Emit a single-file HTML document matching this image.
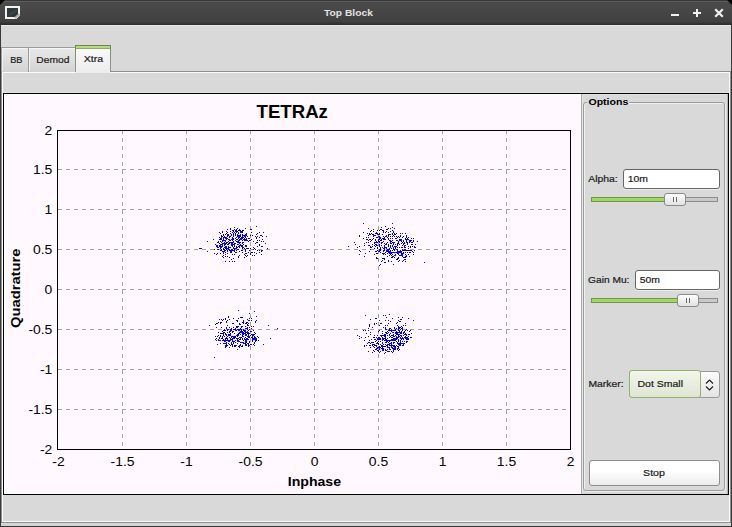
<!DOCTYPE html>
<html><head><meta charset="utf-8">
<style>
*{margin:0;padding:0;box-sizing:border-box}
html,body{width:732px;height:527px;overflow:hidden;background:#d9d9d9;font-family:"Liberation Sans",sans-serif}
.a{position:absolute}
</style></head><body>
<!-- window base -->
<div class="a" style="left:0;top:0;width:732px;height:527px;background:#393939"></div>
<div class="a" style="left:1px;top:25px;width:730px;height:501px;background:#d9d9d9"></div>
<div class="a" style="left:1px;top:25px;width:730px;height:1px;background:#e9e9e9"></div>
<div class="a" style="left:1px;top:523px;width:730px;height:3px;background:linear-gradient(#dadada,#cfcfcf)"></div>
<!-- title bar -->
<div class="a" style="left:0;top:0;width:732px;height:25px;background:linear-gradient(#383838 0,#383838 1px,#5c5c5c 1px,#5c5c5c 2px,#4b4b4b 2px,#414141 22px,#363636 23px,#2c2c2c 25px)"></div>

<!-- tab pane frame -->
<div class="a" style="left:1px;top:71px;width:730px;height:452px;border:1px solid #8f8f8f"></div>
<div class="a" style="left:2px;top:72px;width:728px;height:450px;border:1px solid #fbfbfb"></div>
<!-- tabs -->
<div class="a" style="left:1px;top:47px;width:28px;height:25px;border:1px solid #9a9a9a;border-bottom:none;background:linear-gradient(#e9e9e9,#d3d3d3)"><div class="a" style="left:0;top:0;width:26px;height:23px;border-left:1px solid #f4f4f4;border-top:1px solid #f4f4f4"></div></div>
<div class="a" style="left:28px;top:47px;width:48px;height:25px;border:1px solid #9a9a9a;border-bottom:none;background:linear-gradient(#e9e9e9,#d3d3d3)"><div class="a" style="left:0;top:0;width:46px;height:23px;border-left:1px solid #f4f4f4;border-top:1px solid #f4f4f4"></div></div>
<div class="a" style="left:75px;top:45px;width:36px;height:28px;background:linear-gradient(#fbfbfb,#ececec)"></div>
<div class="a" style="left:75px;top:45px;width:1px;height:27px;background:linear-gradient(#6f8a48,#7f9466 30%,#8f9a88)"></div>
<div class="a" style="left:110px;top:45px;width:1px;height:27px;background:linear-gradient(#6f8a48,#7f9466 30%,#8f9a88)"></div>
<div class="a" style="left:75px;top:45px;width:36px;height:1px;background:#6f8a48"></div>
<div class="a" style="left:76px;top:46px;width:34px;height:2px;background:#b6db78"></div>
<div class="a" style="left:76px;top:48px;width:34px;height:1px;background:#8ea76a"></div>

<!-- black frame -->
<div class="a" style="left:3px;top:92px;width:726px;height:1px;background:#e3e3e3"></div>
<div class="a" style="left:3px;top:93px;width:726px;height:402px;border:1px solid #000"></div>
<!-- plot area -->
<div class="a" style="left:4px;top:94px;width:577px;height:400px;background:#fff8ff;border:1px solid #ffffff"></div>
<div class="a" style="left:581px;top:94px;width:1px;height:400px;background:#a9a9a9"></div>
<div class="a" style="left:582px;top:94px;width:1px;height:400px;background:#e6e6e6"></div>
<div class="a" style="left:582px;top:94px;width:146px;height:1px;background:#e6e6e6"></div>
<div class="a" style="left:727px;top:94px;width:1px;height:400px;background:#b4b4b4"></div>

<!-- options group -->
<div class="a" style="left:584px;top:103px;width:142px;height:389px;border:1px solid #f0f0f0;border-radius:3px"></div>
<div class="a" style="left:583px;top:102px;width:142px;height:389px;border:1px solid #9c9c9c;border-radius:3px"></div>
<div class="a" style="left:587px;top:96px;width:42px;height:12px;background:#d9d9d9"></div>

<div class="a" style="left:623px;top:169px;width:97px;height:20px;border:1px solid #666;border-radius:3px;background:#fff;box-shadow:0 1px 0 #ececec"></div>
<!-- slider 1 -->
<div class="a" style="left:591px;top:197px;width:127px;height:5px;border:1px solid #8c8c8c;background:#c9c9c9"></div>
<div class="a" style="left:591px;top:197px;width:75px;height:5px;border:1px solid #6d9a3e;background:#a6d46b"></div>
<div class="a" style="left:664px;top:193px;width:22px;height:13px;border:1px solid #8a8a8a;border-radius:3px;background:linear-gradient(#fdfdfd,#e2e2e2)"></div>
<div class="a" style="left:673px;top:197px;width:1px;height:5px;background:#6a6a6a"></div>
<div class="a" style="left:676px;top:197px;width:1px;height:5px;background:#6a6a6a"></div>

<div class="a" style="left:635px;top:270px;width:85px;height:20px;border:1px solid #666;border-radius:3px;background:#fff;box-shadow:0 1px 0 #ececec"></div>
<!-- slider 2 -->
<div class="a" style="left:591px;top:298px;width:127px;height:5px;border:1px solid #8c8c8c;background:#c9c9c9"></div>
<div class="a" style="left:591px;top:298px;width:88px;height:5px;border:1px solid #6d9a3e;background:#a6d46b"></div>
<div class="a" style="left:677px;top:294px;width:22px;height:13px;border:1px solid #8a8a8a;border-radius:3px;background:linear-gradient(#fdfdfd,#e2e2e2)"></div>
<div class="a" style="left:686px;top:298px;width:1px;height:5px;background:#6a6a6a"></div>
<div class="a" style="left:689px;top:298px;width:1px;height:5px;background:#6a6a6a"></div>

<!-- combo -->
<div class="a" style="left:699px;top:371px;width:21px;height:27px;border:1px solid #9a9a9a;border-radius:0 3px 3px 0;background:linear-gradient(#fcfcfc,#e4e4e4)"></div>
<div class="a" style="left:629px;top:370px;width:72px;height:28px;border:1px solid #93b06c;border-radius:3px;background:linear-gradient(#f3f6ec,#dfe5d3)"></div>
<svg class="a" style="left:700px;top:371px" width="20" height="26">
 <path d="M6 12.5L9.5 9L13 12.5M6 15.5L9.5 19L13 15.5" fill="none" stroke="#1a1a1a" stroke-width="1.1"/>
</svg>
<!-- stop button -->
<div class="a" style="left:589px;top:460px;width:131px;height:26px;border:1px solid #8e8e8e;border-radius:3px;background:linear-gradient(#ffffff,#ffffff 40%,#ececec)"></div>

<!-- overlay svg: title bar icons, plot, texts -->
<svg class="a" style="left:0;top:0" width="732" height="527" font-family="Liberation Sans">
 <path d="M0 0H5L0 5Z" fill="#000"/>
 <path d="M727 0H732V5Z" fill="#000"/>
 <path d="M6 7H19V15L16 18H6Z" fill="none" stroke="#f2f2f2" stroke-width="2"/>
 <path d="M7 8H18V15L15 17H7Z" fill="#313a3a"/>
 <path d="M9 15L17 10" stroke="#3d4747" stroke-width="2"/>
 <path d="M15 18L19.5 14" stroke="#a8b0a8" stroke-width="2"/>
 <rect x="671" y="14" width="8" height="2" fill="#f0f0f0"/>
 <rect x="693" y="12" width="8" height="2" fill="#f0f0f0"/>
 <rect x="696" y="9" width="2" height="8" fill="#f0f0f0"/>
 <path d="M716 10L722 16M722 10L716 16" stroke="#f0f0f0" stroke-width="2.2" stroke-linecap="square"/>
 <line x1="122.5" y1="130" x2="122.5" y2="449" stroke="#a2a2a2" stroke-width="1" stroke-dasharray="4 4"/>
<line x1="186.5" y1="130" x2="186.5" y2="449" stroke="#a2a2a2" stroke-width="1" stroke-dasharray="4 4"/>
<line x1="250.5" y1="130" x2="250.5" y2="449" stroke="#a2a2a2" stroke-width="1" stroke-dasharray="4 4"/>
<line x1="314.5" y1="130" x2="314.5" y2="449" stroke="#a2a2a2" stroke-width="1" stroke-dasharray="4 4"/>
<line x1="378.5" y1="130" x2="378.5" y2="449" stroke="#a2a2a2" stroke-width="1" stroke-dasharray="4 4"/>
<line x1="442.5" y1="130" x2="442.5" y2="449" stroke="#a2a2a2" stroke-width="1" stroke-dasharray="4 4"/>
<line x1="506.5" y1="130" x2="506.5" y2="449" stroke="#a2a2a2" stroke-width="1" stroke-dasharray="4 4"/>
<line x1="58" y1="169.5" x2="570" y2="169.5" stroke="#a2a2a2" stroke-width="1" stroke-dasharray="4 4"/>
<line x1="58" y1="209.5" x2="570" y2="209.5" stroke="#a2a2a2" stroke-width="1" stroke-dasharray="4 4"/>
<line x1="58" y1="249.5" x2="570" y2="249.5" stroke="#a2a2a2" stroke-width="1" stroke-dasharray="4 4"/>
<line x1="58" y1="289.5" x2="570" y2="289.5" stroke="#a2a2a2" stroke-width="1" stroke-dasharray="4 4"/>
<line x1="58" y1="329.5" x2="570" y2="329.5" stroke="#a2a2a2" stroke-width="1" stroke-dasharray="4 4"/>
<line x1="58" y1="369.5" x2="570" y2="369.5" stroke="#a2a2a2" stroke-width="1" stroke-dasharray="4 4"/>
<line x1="58" y1="409.5" x2="570" y2="409.5" stroke="#a2a2a2" stroke-width="1" stroke-dasharray="4 4"/>
<path d="M199 248h1v1h-1zM200 248h1v1h-1zM201 248h1v1h-1zM207 241h1v1h-1zM207 251h1v1h-1zM209 325h1v1h-1zM213 239h1v1h-1zM214 249h1v1h-1zM214 253h1v1h-1zM214 357h1v1h-1zM215 244h1v1h-1zM215 324h1v1h-1zM215 336h1v1h-1zM215 339h1v1h-1zM216 245h1v1h-1zM216 246h1v1h-1zM216 254h1v1h-1zM216 323h1v1h-1zM216 327h1v1h-1zM216 338h1v1h-1zM216 340h1v1h-1zM217 242h1v1h-1zM217 245h1v1h-1zM217 246h1v1h-1zM217 247h1v1h-1zM217 249h1v1h-1zM217 253h1v1h-1zM217 323h1v1h-1zM217 336h1v1h-1zM217 344h1v1h-1zM218 241h1v1h-1zM218 242h1v1h-1zM218 247h1v1h-1zM218 249h1v1h-1zM218 322h1v1h-1zM218 332h1v1h-1zM218 335h1v1h-1zM218 339h1v1h-1zM218 340h1v1h-1zM219 232h1v1h-1zM219 237h1v1h-1zM219 239h1v1h-1zM219 243h1v1h-1zM219 245h1v1h-1zM219 246h1v1h-1zM219 319h1v1h-1zM219 337h1v1h-1zM219 338h1v1h-1zM219 340h1v1h-1zM220 233h1v1h-1zM220 238h1v1h-1zM220 239h1v1h-1zM220 241h1v1h-1zM220 244h1v1h-1zM220 245h1v1h-1zM220 246h1v1h-1zM220 247h1v1h-1zM220 248h1v1h-1zM220 250h1v1h-1zM220 253h1v1h-1zM220 322h1v1h-1zM220 323h1v1h-1zM220 333h1v1h-1zM220 335h1v1h-1zM220 336h1v1h-1zM220 340h1v1h-1zM220 343h1v1h-1zM221 235h1v1h-1zM221 236h1v1h-1zM221 237h1v1h-1zM221 238h1v1h-1zM221 239h1v1h-1zM221 242h1v1h-1zM221 244h1v1h-1zM221 246h1v1h-1zM221 247h1v1h-1zM221 249h1v1h-1zM221 250h1v1h-1zM221 319h1v1h-1zM221 322h1v1h-1zM221 327h1v1h-1zM221 333h1v1h-1zM221 338h1v1h-1zM222 231h1v1h-1zM222 232h1v1h-1zM222 236h1v1h-1zM222 240h1v1h-1zM222 241h1v1h-1zM222 243h1v1h-1zM222 244h1v1h-1zM222 245h1v1h-1zM222 246h1v1h-1zM222 251h1v1h-1zM222 256h1v1h-1zM222 320h1v1h-1zM222 331h1v1h-1zM222 333h1v1h-1zM222 336h1v1h-1zM222 337h1v1h-1zM222 338h1v1h-1zM222 340h1v1h-1zM223 234h1v1h-1zM223 235h1v1h-1zM223 237h1v1h-1zM223 238h1v1h-1zM223 239h1v1h-1zM223 240h1v1h-1zM223 243h1v1h-1zM223 248h1v1h-1zM223 249h1v1h-1zM223 251h1v1h-1zM223 252h1v1h-1zM223 253h1v1h-1zM223 255h1v1h-1zM223 257h1v1h-1zM223 319h1v1h-1zM223 330h1v1h-1zM223 332h1v1h-1zM223 333h1v1h-1zM223 334h1v1h-1zM223 335h1v1h-1zM223 339h1v1h-1zM223 340h1v1h-1zM223 343h1v1h-1zM224 236h1v1h-1zM224 237h1v1h-1zM224 240h1v1h-1zM224 242h1v1h-1zM224 243h1v1h-1zM224 244h1v1h-1zM224 245h1v1h-1zM224 247h1v1h-1zM224 249h1v1h-1zM224 250h1v1h-1zM224 251h1v1h-1zM224 329h1v1h-1zM224 330h1v1h-1zM224 332h1v1h-1zM224 336h1v1h-1zM224 340h1v1h-1zM224 341h1v1h-1zM224 343h1v1h-1zM225 234h1v1h-1zM225 237h1v1h-1zM225 238h1v1h-1zM225 240h1v1h-1zM225 241h1v1h-1zM225 243h1v1h-1zM225 244h1v1h-1zM225 246h1v1h-1zM225 247h1v1h-1zM225 248h1v1h-1zM225 250h1v1h-1zM225 252h1v1h-1zM225 254h1v1h-1zM225 256h1v1h-1zM225 261h1v1h-1zM225 318h1v1h-1zM225 319h1v1h-1zM225 330h1v1h-1zM225 333h1v1h-1zM225 334h1v1h-1zM225 338h1v1h-1zM225 339h1v1h-1zM225 340h1v1h-1zM225 341h1v1h-1zM225 343h1v1h-1zM225 345h1v1h-1zM225 346h1v1h-1zM225 347h1v1h-1zM226 231h1v1h-1zM226 233h1v1h-1zM226 237h1v1h-1zM226 238h1v1h-1zM226 239h1v1h-1zM226 242h1v1h-1zM226 243h1v1h-1zM226 246h1v1h-1zM226 247h1v1h-1zM226 248h1v1h-1zM226 249h1v1h-1zM226 321h1v1h-1zM226 322h1v1h-1zM226 327h1v1h-1zM226 328h1v1h-1zM226 334h1v1h-1zM226 335h1v1h-1zM226 337h1v1h-1zM226 338h1v1h-1zM226 340h1v1h-1zM226 342h1v1h-1zM226 343h1v1h-1zM226 344h1v1h-1zM226 345h1v1h-1zM226 346h1v1h-1zM227 229h1v1h-1zM227 232h1v1h-1zM227 234h1v1h-1zM227 235h1v1h-1zM227 236h1v1h-1zM227 238h1v1h-1zM227 242h1v1h-1zM227 244h1v1h-1zM227 248h1v1h-1zM227 250h1v1h-1zM227 251h1v1h-1zM227 253h1v1h-1zM227 256h1v1h-1zM227 320h1v1h-1zM227 325h1v1h-1zM227 329h1v1h-1zM227 330h1v1h-1zM227 332h1v1h-1zM227 336h1v1h-1zM227 338h1v1h-1zM227 339h1v1h-1zM227 340h1v1h-1zM227 345h1v1h-1zM228 234h1v1h-1zM228 235h1v1h-1zM228 239h1v1h-1zM228 241h1v1h-1zM228 243h1v1h-1zM228 244h1v1h-1zM228 246h1v1h-1zM228 247h1v1h-1zM228 248h1v1h-1zM228 249h1v1h-1zM228 316h1v1h-1zM228 317h1v1h-1zM228 329h1v1h-1zM228 334h1v1h-1zM228 335h1v1h-1zM228 340h1v1h-1zM228 341h1v1h-1zM228 343h1v1h-1zM229 236h1v1h-1zM229 237h1v1h-1zM229 239h1v1h-1zM229 240h1v1h-1zM229 242h1v1h-1zM229 243h1v1h-1zM229 247h1v1h-1zM229 249h1v1h-1zM229 250h1v1h-1zM229 257h1v1h-1zM229 261h1v1h-1zM229 319h1v1h-1zM229 327h1v1h-1zM229 331h1v1h-1zM229 332h1v1h-1zM229 334h1v1h-1zM229 335h1v1h-1zM229 337h1v1h-1zM229 340h1v1h-1zM229 341h1v1h-1zM229 344h1v1h-1zM229 347h1v1h-1zM230 228h1v1h-1zM230 229h1v1h-1zM230 231h1v1h-1zM230 233h1v1h-1zM230 236h1v1h-1zM230 240h1v1h-1zM230 242h1v1h-1zM230 247h1v1h-1zM230 250h1v1h-1zM230 251h1v1h-1zM230 252h1v1h-1zM230 329h1v1h-1zM230 330h1v1h-1zM230 331h1v1h-1zM230 333h1v1h-1zM230 334h1v1h-1zM230 335h1v1h-1zM230 338h1v1h-1zM230 339h1v1h-1zM230 340h1v1h-1zM230 345h1v1h-1zM231 234h1v1h-1zM231 235h1v1h-1zM231 239h1v1h-1zM231 242h1v1h-1zM231 243h1v1h-1zM231 244h1v1h-1zM231 245h1v1h-1zM231 249h1v1h-1zM231 250h1v1h-1zM231 251h1v1h-1zM231 252h1v1h-1zM231 259h1v1h-1zM231 328h1v1h-1zM231 329h1v1h-1zM231 330h1v1h-1zM231 336h1v1h-1zM231 337h1v1h-1zM231 339h1v1h-1zM231 342h1v1h-1zM231 343h1v1h-1zM231 344h1v1h-1zM232 230h1v1h-1zM232 232h1v1h-1zM232 237h1v1h-1zM232 238h1v1h-1zM232 239h1v1h-1zM232 240h1v1h-1zM232 242h1v1h-1zM232 243h1v1h-1zM232 244h1v1h-1zM232 245h1v1h-1zM232 246h1v1h-1zM232 249h1v1h-1zM232 250h1v1h-1zM232 254h1v1h-1zM232 261h1v1h-1zM232 323h1v1h-1zM232 331h1v1h-1zM232 332h1v1h-1zM232 336h1v1h-1zM232 338h1v1h-1zM232 339h1v1h-1zM232 340h1v1h-1zM232 341h1v1h-1zM232 344h1v1h-1zM232 345h1v1h-1zM232 346h1v1h-1zM233 230h1v1h-1zM233 231h1v1h-1zM233 233h1v1h-1zM233 234h1v1h-1zM233 235h1v1h-1zM233 236h1v1h-1zM233 238h1v1h-1zM233 239h1v1h-1zM233 241h1v1h-1zM233 242h1v1h-1zM233 244h1v1h-1zM233 247h1v1h-1zM233 248h1v1h-1zM233 250h1v1h-1zM233 258h1v1h-1zM233 318h1v1h-1zM233 323h1v1h-1zM233 327h1v1h-1zM233 329h1v1h-1zM233 331h1v1h-1zM233 336h1v1h-1zM233 337h1v1h-1zM233 338h1v1h-1zM233 341h1v1h-1zM233 342h1v1h-1zM233 343h1v1h-1zM234 227h1v1h-1zM234 229h1v1h-1zM234 232h1v1h-1zM234 243h1v1h-1zM234 244h1v1h-1zM234 245h1v1h-1zM234 246h1v1h-1zM234 248h1v1h-1zM234 249h1v1h-1zM234 250h1v1h-1zM234 251h1v1h-1zM234 254h1v1h-1zM234 261h1v1h-1zM234 329h1v1h-1zM234 333h1v1h-1zM234 336h1v1h-1zM234 337h1v1h-1zM234 338h1v1h-1zM234 341h1v1h-1zM234 345h1v1h-1zM234 346h1v1h-1zM235 230h1v1h-1zM235 231h1v1h-1zM235 233h1v1h-1zM235 234h1v1h-1zM235 235h1v1h-1zM235 238h1v1h-1zM235 240h1v1h-1zM235 243h1v1h-1zM235 248h1v1h-1zM235 252h1v1h-1zM235 328h1v1h-1zM235 329h1v1h-1zM235 330h1v1h-1zM235 336h1v1h-1zM235 337h1v1h-1zM235 340h1v1h-1zM235 342h1v1h-1zM235 345h1v1h-1zM235 346h1v1h-1zM236 229h1v1h-1zM236 230h1v1h-1zM236 231h1v1h-1zM236 232h1v1h-1zM236 237h1v1h-1zM236 239h1v1h-1zM236 241h1v1h-1zM236 246h1v1h-1zM236 247h1v1h-1zM236 248h1v1h-1zM236 250h1v1h-1zM236 252h1v1h-1zM236 320h1v1h-1zM236 326h1v1h-1zM236 327h1v1h-1zM236 330h1v1h-1zM236 335h1v1h-1zM236 338h1v1h-1zM236 345h1v1h-1zM237 228h1v1h-1zM237 231h1v1h-1zM237 234h1v1h-1zM237 235h1v1h-1zM237 236h1v1h-1zM237 239h1v1h-1zM237 241h1v1h-1zM237 242h1v1h-1zM237 244h1v1h-1zM237 247h1v1h-1zM237 249h1v1h-1zM237 320h1v1h-1zM237 321h1v1h-1zM237 326h1v1h-1zM237 327h1v1h-1zM237 329h1v1h-1zM237 334h1v1h-1zM237 335h1v1h-1zM237 336h1v1h-1zM237 338h1v1h-1zM237 339h1v1h-1zM237 340h1v1h-1zM237 341h1v1h-1zM237 343h1v1h-1zM237 349h1v1h-1zM238 230h1v1h-1zM238 232h1v1h-1zM238 233h1v1h-1zM238 235h1v1h-1zM238 236h1v1h-1zM238 237h1v1h-1zM238 238h1v1h-1zM238 240h1v1h-1zM238 241h1v1h-1zM238 242h1v1h-1zM238 244h1v1h-1zM238 246h1v1h-1zM238 249h1v1h-1zM238 256h1v1h-1zM238 257h1v1h-1zM238 310h1v1h-1zM238 318h1v1h-1zM238 326h1v1h-1zM238 329h1v1h-1zM238 330h1v1h-1zM238 333h1v1h-1zM238 334h1v1h-1zM238 335h1v1h-1zM238 338h1v1h-1zM238 340h1v1h-1zM238 341h1v1h-1zM238 346h1v1h-1zM239 229h1v1h-1zM239 230h1v1h-1zM239 235h1v1h-1zM239 236h1v1h-1zM239 237h1v1h-1zM239 239h1v1h-1zM239 240h1v1h-1zM239 242h1v1h-1zM239 243h1v1h-1zM239 245h1v1h-1zM239 246h1v1h-1zM239 247h1v1h-1zM239 251h1v1h-1zM239 255h1v1h-1zM239 323h1v1h-1zM239 324h1v1h-1zM239 329h1v1h-1zM239 330h1v1h-1zM239 332h1v1h-1zM239 333h1v1h-1zM239 337h1v1h-1zM239 339h1v1h-1zM239 341h1v1h-1zM239 345h1v1h-1zM239 346h1v1h-1zM239 347h1v1h-1zM240 230h1v1h-1zM240 231h1v1h-1zM240 232h1v1h-1zM240 234h1v1h-1zM240 235h1v1h-1zM240 236h1v1h-1zM240 238h1v1h-1zM240 239h1v1h-1zM240 242h1v1h-1zM240 244h1v1h-1zM240 245h1v1h-1zM240 317h1v1h-1zM240 324h1v1h-1zM240 328h1v1h-1zM240 329h1v1h-1zM240 331h1v1h-1zM240 332h1v1h-1zM240 334h1v1h-1zM240 337h1v1h-1zM240 338h1v1h-1zM240 339h1v1h-1zM240 342h1v1h-1zM240 344h1v1h-1zM240 345h1v1h-1zM241 231h1v1h-1zM241 232h1v1h-1zM241 237h1v1h-1zM241 238h1v1h-1zM241 239h1v1h-1zM241 245h1v1h-1zM241 246h1v1h-1zM241 250h1v1h-1zM241 317h1v1h-1zM241 326h1v1h-1zM241 327h1v1h-1zM241 329h1v1h-1zM241 330h1v1h-1zM241 331h1v1h-1zM241 332h1v1h-1zM241 337h1v1h-1zM241 342h1v1h-1zM241 346h1v1h-1zM242 230h1v1h-1zM242 231h1v1h-1zM242 232h1v1h-1zM242 234h1v1h-1zM242 235h1v1h-1zM242 236h1v1h-1zM242 237h1v1h-1zM242 238h1v1h-1zM242 240h1v1h-1zM242 242h1v1h-1zM242 243h1v1h-1zM242 245h1v1h-1zM242 246h1v1h-1zM242 247h1v1h-1zM242 248h1v1h-1zM242 250h1v1h-1zM242 252h1v1h-1zM242 317h1v1h-1zM242 322h1v1h-1zM242 326h1v1h-1zM242 331h1v1h-1zM242 332h1v1h-1zM242 333h1v1h-1zM242 334h1v1h-1zM242 335h1v1h-1zM242 336h1v1h-1zM242 338h1v1h-1zM242 339h1v1h-1zM242 342h1v1h-1zM242 345h1v1h-1zM242 346h1v1h-1zM243 230h1v1h-1zM243 235h1v1h-1zM243 237h1v1h-1zM243 239h1v1h-1zM243 242h1v1h-1zM243 244h1v1h-1zM243 247h1v1h-1zM243 320h1v1h-1zM243 321h1v1h-1zM243 322h1v1h-1zM243 323h1v1h-1zM243 329h1v1h-1zM243 330h1v1h-1zM243 332h1v1h-1zM243 333h1v1h-1zM243 334h1v1h-1zM243 336h1v1h-1zM243 340h1v1h-1zM243 342h1v1h-1zM243 343h1v1h-1zM244 235h1v1h-1zM244 236h1v1h-1zM244 238h1v1h-1zM244 239h1v1h-1zM244 240h1v1h-1zM244 248h1v1h-1zM244 254h1v1h-1zM244 257h1v1h-1zM244 330h1v1h-1zM244 331h1v1h-1zM244 333h1v1h-1zM244 338h1v1h-1zM244 339h1v1h-1zM244 343h1v1h-1zM245 228h1v1h-1zM245 234h1v1h-1zM245 235h1v1h-1zM245 236h1v1h-1zM245 237h1v1h-1zM245 239h1v1h-1zM245 240h1v1h-1zM245 245h1v1h-1zM245 246h1v1h-1zM245 249h1v1h-1zM245 250h1v1h-1zM245 251h1v1h-1zM245 253h1v1h-1zM245 255h1v1h-1zM245 323h1v1h-1zM245 326h1v1h-1zM245 328h1v1h-1zM245 330h1v1h-1zM245 331h1v1h-1zM245 332h1v1h-1zM245 333h1v1h-1zM245 334h1v1h-1zM245 335h1v1h-1zM245 337h1v1h-1zM245 339h1v1h-1zM245 340h1v1h-1zM245 341h1v1h-1zM245 342h1v1h-1zM245 343h1v1h-1zM245 344h1v1h-1zM245 345h1v1h-1zM246 233h1v1h-1zM246 234h1v1h-1zM246 235h1v1h-1zM246 238h1v1h-1zM246 239h1v1h-1zM246 240h1v1h-1zM246 245h1v1h-1zM246 246h1v1h-1zM246 248h1v1h-1zM246 253h1v1h-1zM246 256h1v1h-1zM246 322h1v1h-1zM246 323h1v1h-1zM246 328h1v1h-1zM246 332h1v1h-1zM246 334h1v1h-1zM246 335h1v1h-1zM246 338h1v1h-1zM246 339h1v1h-1zM246 340h1v1h-1zM246 341h1v1h-1zM246 342h1v1h-1zM246 344h1v1h-1zM246 345h1v1h-1zM247 236h1v1h-1zM247 240h1v1h-1zM247 248h1v1h-1zM247 255h1v1h-1zM247 319h1v1h-1zM247 322h1v1h-1zM247 324h1v1h-1zM247 325h1v1h-1zM247 327h1v1h-1zM247 328h1v1h-1zM247 329h1v1h-1zM247 331h1v1h-1zM247 332h1v1h-1zM247 333h1v1h-1zM247 336h1v1h-1zM247 338h1v1h-1zM247 339h1v1h-1zM247 343h1v1h-1zM248 238h1v1h-1zM248 241h1v1h-1zM248 248h1v1h-1zM248 252h1v1h-1zM248 320h1v1h-1zM248 323h1v1h-1zM248 325h1v1h-1zM248 330h1v1h-1zM248 332h1v1h-1zM248 333h1v1h-1zM248 334h1v1h-1zM248 335h1v1h-1zM248 336h1v1h-1zM248 337h1v1h-1zM248 339h1v1h-1zM248 343h1v1h-1zM248 344h1v1h-1zM248 345h1v1h-1zM248 346h1v1h-1zM249 238h1v1h-1zM249 240h1v1h-1zM249 250h1v1h-1zM249 313h1v1h-1zM249 318h1v1h-1zM249 320h1v1h-1zM249 327h1v1h-1zM249 329h1v1h-1zM249 333h1v1h-1zM249 336h1v1h-1zM249 337h1v1h-1zM249 341h1v1h-1zM249 342h1v1h-1zM249 345h1v1h-1zM250 229h1v1h-1zM250 235h1v1h-1zM250 240h1v1h-1zM250 248h1v1h-1zM250 253h1v1h-1zM250 254h1v1h-1zM250 331h1v1h-1zM250 335h1v1h-1zM250 344h1v1h-1zM251 229h1v1h-1zM251 232h1v1h-1zM251 239h1v1h-1zM251 252h1v1h-1zM251 318h1v1h-1zM251 320h1v1h-1zM251 326h1v1h-1zM251 328h1v1h-1zM251 331h1v1h-1zM251 334h1v1h-1zM251 337h1v1h-1zM251 344h1v1h-1zM252 235h1v1h-1zM252 252h1v1h-1zM252 255h1v1h-1zM252 334h1v1h-1zM252 335h1v1h-1zM252 336h1v1h-1zM252 337h1v1h-1zM252 338h1v1h-1zM252 339h1v1h-1zM252 340h1v1h-1zM252 341h1v1h-1zM253 241h1v1h-1zM253 247h1v1h-1zM253 249h1v1h-1zM253 326h1v1h-1zM253 330h1v1h-1zM253 334h1v1h-1zM253 335h1v1h-1zM253 338h1v1h-1zM253 339h1v1h-1zM253 344h1v1h-1zM254 248h1v1h-1zM254 252h1v1h-1zM254 255h1v1h-1zM254 311h1v1h-1zM254 332h1v1h-1zM254 334h1v1h-1zM254 336h1v1h-1zM254 337h1v1h-1zM254 338h1v1h-1zM254 339h1v1h-1zM254 342h1v1h-1zM254 343h1v1h-1zM254 345h1v1h-1zM255 236h1v1h-1zM255 243h1v1h-1zM255 249h1v1h-1zM255 321h1v1h-1zM255 322h1v1h-1zM255 333h1v1h-1zM255 337h1v1h-1zM255 338h1v1h-1zM255 339h1v1h-1zM255 340h1v1h-1zM255 341h1v1h-1zM256 226h1v1h-1zM256 234h1v1h-1zM256 237h1v1h-1zM256 238h1v1h-1zM256 242h1v1h-1zM256 253h1v1h-1zM256 316h1v1h-1zM256 320h1v1h-1zM256 338h1v1h-1zM256 339h1v1h-1zM256 340h1v1h-1zM257 233h1v1h-1zM257 236h1v1h-1zM257 240h1v1h-1zM257 242h1v1h-1zM257 246h1v1h-1zM257 250h1v1h-1zM257 336h1v1h-1zM258 337h1v1h-1zM258 340h1v1h-1zM259 232h1v1h-1zM259 237h1v1h-1zM259 240h1v1h-1zM259 244h1v1h-1zM259 245h1v1h-1zM259 250h1v1h-1zM259 252h1v1h-1zM260 235h1v1h-1zM261 235h1v1h-1zM261 241h1v1h-1zM261 246h1v1h-1zM261 250h1v1h-1zM261 251h1v1h-1zM261 254h1v1h-1zM262 236h1v1h-1zM262 239h1v1h-1zM262 246h1v1h-1zM262 250h1v1h-1zM263 232h1v1h-1zM263 241h1v1h-1zM263 344h1v1h-1zM265 243h1v1h-1zM266 236h1v1h-1zM267 248h1v1h-1zM268 325h1v1h-1zM270 338h1v1h-1zM277 328h1v1h-1zM348 246h1v1h-1zM354 242h1v1h-1zM355 244h1v1h-1zM357 247h1v1h-1zM357 335h1v1h-1zM359 235h1v1h-1zM359 236h1v1h-1zM359 246h1v1h-1zM359 250h1v1h-1zM359 254h1v1h-1zM359 336h1v1h-1zM359 338h1v1h-1zM360 251h1v1h-1zM361 337h1v1h-1zM363 223h1v1h-1zM363 232h1v1h-1zM363 238h1v1h-1zM363 330h1v1h-1zM364 243h1v1h-1zM364 245h1v1h-1zM364 256h1v1h-1zM364 340h1v1h-1zM364 345h1v1h-1zM364 346h1v1h-1zM365 253h1v1h-1zM365 315h1v1h-1zM365 330h1v1h-1zM365 337h1v1h-1zM366 237h1v1h-1zM366 239h1v1h-1zM366 242h1v1h-1zM366 333h1v1h-1zM366 345h1v1h-1zM367 233h1v1h-1zM367 239h1v1h-1zM367 343h1v1h-1zM368 228h1v1h-1zM368 235h1v1h-1zM368 237h1v1h-1zM368 240h1v1h-1zM368 242h1v1h-1zM368 245h1v1h-1zM368 328h1v1h-1zM368 330h1v1h-1zM368 336h1v1h-1zM368 342h1v1h-1zM368 351h1v1h-1zM369 233h1v1h-1zM369 234h1v1h-1zM369 239h1v1h-1zM369 245h1v1h-1zM369 251h1v1h-1zM369 324h1v1h-1zM369 325h1v1h-1zM369 326h1v1h-1zM369 340h1v1h-1zM369 342h1v1h-1zM369 345h1v1h-1zM370 231h1v1h-1zM370 234h1v1h-1zM370 239h1v1h-1zM370 241h1v1h-1zM370 246h1v1h-1zM370 247h1v1h-1zM370 249h1v1h-1zM370 319h1v1h-1zM370 332h1v1h-1zM370 334h1v1h-1zM370 343h1v1h-1zM370 345h1v1h-1zM370 347h1v1h-1zM371 230h1v1h-1zM371 233h1v1h-1zM371 240h1v1h-1zM371 247h1v1h-1zM371 339h1v1h-1zM371 342h1v1h-1zM372 234h1v1h-1zM372 239h1v1h-1zM372 244h1v1h-1zM372 246h1v1h-1zM372 327h1v1h-1zM372 342h1v1h-1zM372 344h1v1h-1zM372 345h1v1h-1zM372 352h1v1h-1zM373 229h1v1h-1zM373 231h1v1h-1zM373 234h1v1h-1zM373 235h1v1h-1zM373 236h1v1h-1zM373 238h1v1h-1zM373 337h1v1h-1zM373 342h1v1h-1zM373 344h1v1h-1zM373 346h1v1h-1zM373 350h1v1h-1zM374 235h1v1h-1zM374 242h1v1h-1zM374 243h1v1h-1zM374 245h1v1h-1zM374 248h1v1h-1zM374 254h1v1h-1zM374 323h1v1h-1zM374 324h1v1h-1zM374 335h1v1h-1zM374 337h1v1h-1zM374 339h1v1h-1zM374 344h1v1h-1zM374 345h1v1h-1zM374 347h1v1h-1zM374 351h1v1h-1zM375 233h1v1h-1zM375 235h1v1h-1zM375 239h1v1h-1zM375 240h1v1h-1zM375 242h1v1h-1zM375 244h1v1h-1zM375 246h1v1h-1zM375 251h1v1h-1zM375 318h1v1h-1zM375 339h1v1h-1zM375 341h1v1h-1zM375 345h1v1h-1zM375 349h1v1h-1zM376 232h1v1h-1zM376 233h1v1h-1zM376 237h1v1h-1zM376 241h1v1h-1zM376 242h1v1h-1zM376 244h1v1h-1zM376 245h1v1h-1zM376 251h1v1h-1zM376 253h1v1h-1zM376 257h1v1h-1zM376 258h1v1h-1zM376 318h1v1h-1zM376 323h1v1h-1zM376 337h1v1h-1zM376 340h1v1h-1zM376 343h1v1h-1zM376 345h1v1h-1zM376 346h1v1h-1zM376 348h1v1h-1zM376 349h1v1h-1zM377 230h1v1h-1zM377 233h1v1h-1zM377 234h1v1h-1zM377 237h1v1h-1zM377 242h1v1h-1zM377 245h1v1h-1zM377 247h1v1h-1zM377 248h1v1h-1zM377 250h1v1h-1zM377 253h1v1h-1zM377 258h1v1h-1zM377 335h1v1h-1zM377 338h1v1h-1zM377 339h1v1h-1zM377 342h1v1h-1zM377 343h1v1h-1zM377 347h1v1h-1zM377 348h1v1h-1zM377 350h1v1h-1zM378 234h1v1h-1zM378 236h1v1h-1zM378 239h1v1h-1zM378 240h1v1h-1zM378 241h1v1h-1zM378 251h1v1h-1zM378 331h1v1h-1zM378 337h1v1h-1zM378 338h1v1h-1zM378 339h1v1h-1zM378 341h1v1h-1zM378 343h1v1h-1zM378 344h1v1h-1zM378 347h1v1h-1zM378 350h1v1h-1zM378 351h1v1h-1zM379 230h1v1h-1zM379 233h1v1h-1zM379 234h1v1h-1zM379 236h1v1h-1zM379 237h1v1h-1zM379 238h1v1h-1zM379 239h1v1h-1zM379 241h1v1h-1zM379 242h1v1h-1zM379 244h1v1h-1zM379 245h1v1h-1zM379 246h1v1h-1zM379 249h1v1h-1zM379 250h1v1h-1zM379 251h1v1h-1zM379 265h1v1h-1zM379 320h1v1h-1zM379 325h1v1h-1zM379 330h1v1h-1zM379 337h1v1h-1zM379 338h1v1h-1zM379 339h1v1h-1zM379 346h1v1h-1zM379 347h1v1h-1zM379 348h1v1h-1zM379 349h1v1h-1zM379 352h1v1h-1zM380 229h1v1h-1zM380 237h1v1h-1zM380 238h1v1h-1zM380 240h1v1h-1zM380 247h1v1h-1zM380 248h1v1h-1zM380 249h1v1h-1zM380 250h1v1h-1zM380 252h1v1h-1zM380 264h1v1h-1zM380 323h1v1h-1zM380 335h1v1h-1zM380 338h1v1h-1zM380 339h1v1h-1zM380 341h1v1h-1zM380 344h1v1h-1zM380 347h1v1h-1zM380 351h1v1h-1zM381 227h1v1h-1zM381 229h1v1h-1zM381 239h1v1h-1zM381 240h1v1h-1zM381 242h1v1h-1zM381 243h1v1h-1zM381 245h1v1h-1zM381 261h1v1h-1zM381 323h1v1h-1zM381 335h1v1h-1zM381 336h1v1h-1zM381 345h1v1h-1zM381 346h1v1h-1zM381 348h1v1h-1zM382 230h1v1h-1zM382 234h1v1h-1zM382 238h1v1h-1zM382 242h1v1h-1zM382 247h1v1h-1zM382 253h1v1h-1zM382 258h1v1h-1zM382 260h1v1h-1zM382 331h1v1h-1zM382 333h1v1h-1zM382 335h1v1h-1zM382 337h1v1h-1zM382 338h1v1h-1zM382 339h1v1h-1zM382 340h1v1h-1zM382 342h1v1h-1zM382 343h1v1h-1zM382 345h1v1h-1zM382 346h1v1h-1zM382 347h1v1h-1zM382 348h1v1h-1zM382 349h1v1h-1zM382 350h1v1h-1zM383 230h1v1h-1zM383 231h1v1h-1zM383 232h1v1h-1zM383 236h1v1h-1zM383 238h1v1h-1zM383 239h1v1h-1zM383 241h1v1h-1zM383 248h1v1h-1zM383 250h1v1h-1zM383 251h1v1h-1zM383 253h1v1h-1zM383 254h1v1h-1zM383 258h1v1h-1zM383 315h1v1h-1zM383 327h1v1h-1zM383 335h1v1h-1zM383 338h1v1h-1zM383 339h1v1h-1zM383 344h1v1h-1zM383 346h1v1h-1zM383 348h1v1h-1zM383 349h1v1h-1zM383 350h1v1h-1zM384 237h1v1h-1zM384 238h1v1h-1zM384 239h1v1h-1zM384 243h1v1h-1zM384 245h1v1h-1zM384 246h1v1h-1zM384 247h1v1h-1zM384 248h1v1h-1zM384 249h1v1h-1zM384 250h1v1h-1zM384 253h1v1h-1zM384 258h1v1h-1zM384 259h1v1h-1zM384 262h1v1h-1zM384 334h1v1h-1zM384 335h1v1h-1zM384 336h1v1h-1zM384 338h1v1h-1zM384 340h1v1h-1zM384 346h1v1h-1zM384 353h1v1h-1zM385 226h1v1h-1zM385 232h1v1h-1zM385 236h1v1h-1zM385 239h1v1h-1zM385 244h1v1h-1zM385 247h1v1h-1zM385 252h1v1h-1zM385 254h1v1h-1zM385 262h1v1h-1zM385 315h1v1h-1zM385 320h1v1h-1zM385 325h1v1h-1zM385 327h1v1h-1zM385 328h1v1h-1zM385 329h1v1h-1zM385 332h1v1h-1zM385 334h1v1h-1zM385 335h1v1h-1zM385 336h1v1h-1zM385 337h1v1h-1zM385 338h1v1h-1zM385 339h1v1h-1zM385 340h1v1h-1zM385 342h1v1h-1zM385 344h1v1h-1zM385 346h1v1h-1zM385 349h1v1h-1zM385 350h1v1h-1zM385 352h1v1h-1zM386 229h1v1h-1zM386 231h1v1h-1zM386 235h1v1h-1zM386 236h1v1h-1zM386 243h1v1h-1zM386 244h1v1h-1zM386 247h1v1h-1zM386 248h1v1h-1zM386 250h1v1h-1zM386 251h1v1h-1zM386 317h1v1h-1zM386 329h1v1h-1zM386 332h1v1h-1zM386 333h1v1h-1zM386 339h1v1h-1zM386 340h1v1h-1zM386 341h1v1h-1zM386 342h1v1h-1zM386 345h1v1h-1zM386 350h1v1h-1zM387 229h1v1h-1zM387 237h1v1h-1zM387 242h1v1h-1zM387 249h1v1h-1zM387 250h1v1h-1zM387 251h1v1h-1zM387 253h1v1h-1zM387 256h1v1h-1zM387 325h1v1h-1zM387 331h1v1h-1zM387 333h1v1h-1zM387 335h1v1h-1zM387 338h1v1h-1zM387 340h1v1h-1zM387 341h1v1h-1zM387 344h1v1h-1zM387 345h1v1h-1zM387 346h1v1h-1zM387 347h1v1h-1zM387 349h1v1h-1zM387 351h1v1h-1zM388 228h1v1h-1zM388 232h1v1h-1zM388 234h1v1h-1zM388 235h1v1h-1zM388 236h1v1h-1zM388 238h1v1h-1zM388 239h1v1h-1zM388 244h1v1h-1zM388 245h1v1h-1zM388 246h1v1h-1zM388 249h1v1h-1zM388 250h1v1h-1zM388 251h1v1h-1zM388 252h1v1h-1zM388 260h1v1h-1zM388 261h1v1h-1zM388 320h1v1h-1zM388 323h1v1h-1zM388 330h1v1h-1zM388 332h1v1h-1zM388 340h1v1h-1zM388 342h1v1h-1zM388 344h1v1h-1zM388 347h1v1h-1zM388 351h1v1h-1zM389 234h1v1h-1zM389 240h1v1h-1zM389 248h1v1h-1zM389 249h1v1h-1zM389 251h1v1h-1zM389 252h1v1h-1zM389 253h1v1h-1zM389 255h1v1h-1zM389 314h1v1h-1zM389 328h1v1h-1zM389 329h1v1h-1zM389 330h1v1h-1zM389 334h1v1h-1zM389 335h1v1h-1zM389 337h1v1h-1zM389 340h1v1h-1zM389 341h1v1h-1zM389 343h1v1h-1zM389 344h1v1h-1zM389 345h1v1h-1zM389 347h1v1h-1zM389 348h1v1h-1zM389 349h1v1h-1zM389 351h1v1h-1zM390 228h1v1h-1zM390 231h1v1h-1zM390 234h1v1h-1zM390 236h1v1h-1zM390 238h1v1h-1zM390 240h1v1h-1zM390 241h1v1h-1zM390 242h1v1h-1zM390 243h1v1h-1zM390 245h1v1h-1zM390 246h1v1h-1zM390 247h1v1h-1zM390 250h1v1h-1zM390 251h1v1h-1zM390 252h1v1h-1zM390 253h1v1h-1zM390 254h1v1h-1zM390 321h1v1h-1zM390 328h1v1h-1zM390 330h1v1h-1zM390 333h1v1h-1zM390 336h1v1h-1zM390 340h1v1h-1zM390 343h1v1h-1zM390 345h1v1h-1zM390 349h1v1h-1zM391 241h1v1h-1zM391 243h1v1h-1zM391 248h1v1h-1zM391 252h1v1h-1zM391 253h1v1h-1zM391 255h1v1h-1zM391 257h1v1h-1zM391 261h1v1h-1zM391 329h1v1h-1zM391 330h1v1h-1zM391 331h1v1h-1zM391 335h1v1h-1zM391 337h1v1h-1zM391 339h1v1h-1zM391 340h1v1h-1zM391 342h1v1h-1zM391 343h1v1h-1zM391 344h1v1h-1zM391 345h1v1h-1zM391 346h1v1h-1zM391 347h1v1h-1zM391 351h1v1h-1zM392 223h1v1h-1zM392 227h1v1h-1zM392 230h1v1h-1zM392 233h1v1h-1zM392 234h1v1h-1zM392 236h1v1h-1zM392 238h1v1h-1zM392 240h1v1h-1zM392 242h1v1h-1zM392 245h1v1h-1zM392 246h1v1h-1zM392 250h1v1h-1zM392 252h1v1h-1zM392 254h1v1h-1zM392 256h1v1h-1zM392 257h1v1h-1zM392 318h1v1h-1zM392 330h1v1h-1zM392 332h1v1h-1zM392 335h1v1h-1zM392 337h1v1h-1zM392 339h1v1h-1zM392 340h1v1h-1zM392 345h1v1h-1zM392 347h1v1h-1zM392 348h1v1h-1zM392 352h1v1h-1zM393 231h1v1h-1zM393 232h1v1h-1zM393 235h1v1h-1zM393 242h1v1h-1zM393 243h1v1h-1zM393 244h1v1h-1zM393 247h1v1h-1zM393 248h1v1h-1zM393 249h1v1h-1zM393 252h1v1h-1zM393 256h1v1h-1zM393 264h1v1h-1zM393 330h1v1h-1zM393 332h1v1h-1zM393 334h1v1h-1zM393 335h1v1h-1zM393 336h1v1h-1zM393 338h1v1h-1zM393 339h1v1h-1zM393 340h1v1h-1zM393 342h1v1h-1zM393 343h1v1h-1zM393 345h1v1h-1zM393 346h1v1h-1zM393 348h1v1h-1zM393 349h1v1h-1zM393 350h1v1h-1zM393 351h1v1h-1zM394 228h1v1h-1zM394 233h1v1h-1zM394 234h1v1h-1zM394 236h1v1h-1zM394 242h1v1h-1zM394 246h1v1h-1zM394 249h1v1h-1zM394 250h1v1h-1zM394 252h1v1h-1zM394 255h1v1h-1zM394 257h1v1h-1zM394 327h1v1h-1zM394 328h1v1h-1zM394 330h1v1h-1zM394 336h1v1h-1zM394 338h1v1h-1zM394 339h1v1h-1zM394 340h1v1h-1zM394 342h1v1h-1zM394 345h1v1h-1zM394 346h1v1h-1zM394 347h1v1h-1zM394 348h1v1h-1zM394 349h1v1h-1zM395 234h1v1h-1zM395 238h1v1h-1zM395 244h1v1h-1zM395 246h1v1h-1zM395 247h1v1h-1zM395 248h1v1h-1zM395 252h1v1h-1zM395 254h1v1h-1zM395 255h1v1h-1zM395 329h1v1h-1zM395 330h1v1h-1zM395 332h1v1h-1zM395 333h1v1h-1zM395 335h1v1h-1zM395 338h1v1h-1zM395 339h1v1h-1zM395 340h1v1h-1zM395 346h1v1h-1zM395 347h1v1h-1zM395 348h1v1h-1zM395 349h1v1h-1zM396 233h1v1h-1zM396 236h1v1h-1zM396 238h1v1h-1zM396 240h1v1h-1zM396 246h1v1h-1zM396 249h1v1h-1zM396 252h1v1h-1zM396 259h1v1h-1zM396 323h1v1h-1zM396 328h1v1h-1zM396 331h1v1h-1zM396 332h1v1h-1zM396 333h1v1h-1zM396 334h1v1h-1zM396 336h1v1h-1zM396 337h1v1h-1zM396 338h1v1h-1zM396 339h1v1h-1zM396 341h1v1h-1zM396 345h1v1h-1zM397 237h1v1h-1zM397 240h1v1h-1zM397 243h1v1h-1zM397 244h1v1h-1zM397 245h1v1h-1zM397 247h1v1h-1zM397 249h1v1h-1zM397 250h1v1h-1zM397 251h1v1h-1zM397 252h1v1h-1zM397 253h1v1h-1zM397 258h1v1h-1zM397 259h1v1h-1zM397 322h1v1h-1zM397 325h1v1h-1zM397 332h1v1h-1zM397 333h1v1h-1zM397 334h1v1h-1zM397 337h1v1h-1zM397 338h1v1h-1zM397 342h1v1h-1zM397 343h1v1h-1zM397 346h1v1h-1zM397 348h1v1h-1zM397 349h1v1h-1zM398 236h1v1h-1zM398 241h1v1h-1zM398 242h1v1h-1zM398 243h1v1h-1zM398 251h1v1h-1zM398 252h1v1h-1zM398 253h1v1h-1zM398 254h1v1h-1zM398 257h1v1h-1zM398 258h1v1h-1zM398 261h1v1h-1zM398 317h1v1h-1zM398 320h1v1h-1zM398 326h1v1h-1zM398 327h1v1h-1zM398 328h1v1h-1zM398 329h1v1h-1zM398 330h1v1h-1zM398 332h1v1h-1zM398 334h1v1h-1zM398 335h1v1h-1zM398 336h1v1h-1zM398 337h1v1h-1zM398 339h1v1h-1zM398 340h1v1h-1zM398 341h1v1h-1zM398 343h1v1h-1zM398 344h1v1h-1zM398 346h1v1h-1zM398 347h1v1h-1zM398 348h1v1h-1zM398 350h1v1h-1zM399 237h1v1h-1zM399 239h1v1h-1zM399 240h1v1h-1zM399 244h1v1h-1zM399 247h1v1h-1zM399 251h1v1h-1zM399 252h1v1h-1zM399 255h1v1h-1zM399 260h1v1h-1zM399 321h1v1h-1zM399 327h1v1h-1zM399 328h1v1h-1zM399 330h1v1h-1zM399 331h1v1h-1zM399 332h1v1h-1zM399 334h1v1h-1zM399 336h1v1h-1zM399 343h1v1h-1zM399 344h1v1h-1zM399 345h1v1h-1zM399 349h1v1h-1zM400 233h1v1h-1zM400 235h1v1h-1zM400 236h1v1h-1zM400 239h1v1h-1zM400 240h1v1h-1zM400 250h1v1h-1zM400 251h1v1h-1zM400 252h1v1h-1zM400 255h1v1h-1zM400 319h1v1h-1zM400 321h1v1h-1zM400 327h1v1h-1zM400 329h1v1h-1zM400 332h1v1h-1zM400 333h1v1h-1zM400 335h1v1h-1zM400 337h1v1h-1zM400 338h1v1h-1zM400 340h1v1h-1zM400 341h1v1h-1zM400 342h1v1h-1zM400 343h1v1h-1zM400 344h1v1h-1zM400 345h1v1h-1zM401 239h1v1h-1zM401 240h1v1h-1zM401 241h1v1h-1zM401 243h1v1h-1zM401 247h1v1h-1zM401 251h1v1h-1zM401 252h1v1h-1zM401 253h1v1h-1zM401 254h1v1h-1zM401 255h1v1h-1zM401 319h1v1h-1zM401 326h1v1h-1zM401 328h1v1h-1zM401 331h1v1h-1zM401 332h1v1h-1zM401 333h1v1h-1zM401 335h1v1h-1zM401 336h1v1h-1zM401 338h1v1h-1zM401 339h1v1h-1zM401 343h1v1h-1zM402 233h1v1h-1zM402 237h1v1h-1zM402 242h1v1h-1zM402 245h1v1h-1zM402 247h1v1h-1zM402 249h1v1h-1zM402 250h1v1h-1zM402 253h1v1h-1zM402 254h1v1h-1zM402 255h1v1h-1zM402 256h1v1h-1zM402 261h1v1h-1zM402 317h1v1h-1zM402 327h1v1h-1zM402 328h1v1h-1zM402 329h1v1h-1zM402 330h1v1h-1zM402 337h1v1h-1zM402 338h1v1h-1zM402 341h1v1h-1zM402 343h1v1h-1zM402 345h1v1h-1zM403 236h1v1h-1zM403 240h1v1h-1zM403 241h1v1h-1zM403 243h1v1h-1zM403 244h1v1h-1zM403 250h1v1h-1zM403 252h1v1h-1zM403 253h1v1h-1zM403 257h1v1h-1zM403 260h1v1h-1zM403 325h1v1h-1zM403 332h1v1h-1zM403 333h1v1h-1zM403 335h1v1h-1zM403 338h1v1h-1zM403 339h1v1h-1zM403 343h1v1h-1zM403 344h1v1h-1zM403 345h1v1h-1zM404 242h1v1h-1zM404 243h1v1h-1zM404 245h1v1h-1zM404 246h1v1h-1zM404 247h1v1h-1zM404 249h1v1h-1zM404 250h1v1h-1zM404 257h1v1h-1zM404 259h1v1h-1zM404 331h1v1h-1zM404 332h1v1h-1zM404 334h1v1h-1zM404 337h1v1h-1zM404 341h1v1h-1zM404 343h1v1h-1zM405 233h1v1h-1zM405 238h1v1h-1zM405 239h1v1h-1zM405 245h1v1h-1zM405 247h1v1h-1zM405 249h1v1h-1zM405 250h1v1h-1zM405 252h1v1h-1zM405 254h1v1h-1zM405 256h1v1h-1zM405 257h1v1h-1zM405 259h1v1h-1zM405 261h1v1h-1zM405 323h1v1h-1zM405 325h1v1h-1zM405 330h1v1h-1zM405 333h1v1h-1zM405 334h1v1h-1zM405 336h1v1h-1zM405 337h1v1h-1zM405 338h1v1h-1zM406 235h1v1h-1zM406 236h1v1h-1zM406 237h1v1h-1zM406 239h1v1h-1zM406 240h1v1h-1zM406 241h1v1h-1zM406 242h1v1h-1zM406 250h1v1h-1zM406 255h1v1h-1zM406 256h1v1h-1zM406 329h1v1h-1zM406 334h1v1h-1zM406 335h1v1h-1zM406 337h1v1h-1zM406 338h1v1h-1zM406 339h1v1h-1zM406 341h1v1h-1zM406 342h1v1h-1zM407 238h1v1h-1zM407 239h1v1h-1zM407 242h1v1h-1zM407 243h1v1h-1zM407 244h1v1h-1zM407 250h1v1h-1zM407 252h1v1h-1zM407 330h1v1h-1zM407 337h1v1h-1zM407 338h1v1h-1zM407 339h1v1h-1zM407 341h1v1h-1zM408 237h1v1h-1zM408 239h1v1h-1zM408 246h1v1h-1zM408 248h1v1h-1zM408 250h1v1h-1zM408 254h1v1h-1zM408 318h1v1h-1zM408 334h1v1h-1zM408 336h1v1h-1zM408 338h1v1h-1zM408 339h1v1h-1zM409 240h1v1h-1zM409 241h1v1h-1zM409 242h1v1h-1zM409 250h1v1h-1zM409 252h1v1h-1zM409 256h1v1h-1zM409 331h1v1h-1zM409 334h1v1h-1zM410 240h1v1h-1zM410 241h1v1h-1zM410 246h1v1h-1zM410 247h1v1h-1zM410 250h1v1h-1zM410 252h1v1h-1zM410 330h1v1h-1zM410 337h1v1h-1zM411 238h1v1h-1zM411 240h1v1h-1zM411 242h1v1h-1zM411 244h1v1h-1zM411 250h1v1h-1zM411 333h1v1h-1zM411 337h1v1h-1zM412 242h1v1h-1zM412 244h1v1h-1zM412 246h1v1h-1zM412 251h1v1h-1zM413 238h1v1h-1zM413 240h1v1h-1zM413 241h1v1h-1zM413 252h1v1h-1zM413 254h1v1h-1zM413 320h1v1h-1zM414 246h1v1h-1zM414 247h1v1h-1zM414 250h1v1h-1zM415 244h1v1h-1zM415 247h1v1h-1zM417 241h1v1h-1zM424 262h1v1h-1z" fill="#0000ff"/>
<rect x="57.5" y="130.5" width="513" height="319" fill="none" stroke="#000" stroke-width="1"/>
<text transform="translate(44.61,134.8) scale(1.160,1)" font-size="12" fill="#000">2</text>
<text transform="translate(33.02,173.8) scale(1.160,1)" font-size="12" fill="#000">1.5</text>
<text transform="translate(44.61,213.8) scale(1.160,1)" font-size="12" fill="#000">1</text>
<text transform="translate(33.02,253.8) scale(1.160,1)" font-size="12" fill="#000">0.5</text>
<text transform="translate(44.61,293.8) scale(1.160,1)" font-size="12" fill="#000">0</text>
<text transform="translate(28.38,333.8) scale(1.160,1)" font-size="12" fill="#000">-0.5</text>
<text transform="translate(39.97,373.8) scale(1.160,1)" font-size="12" fill="#000">-1</text>
<text transform="translate(28.38,413.8) scale(1.160,1)" font-size="12" fill="#000">-1.5</text>
<text transform="translate(39.97,453.8) scale(1.160,1)" font-size="12" fill="#000">-2</text>
<text transform="translate(52.34,466) scale(1.160,1)" font-size="12" fill="#000">-2</text>
<text transform="translate(110.54,466) scale(1.160,1)" font-size="12" fill="#000">-1.5</text>
<text transform="translate(180.34,466) scale(1.160,1)" font-size="12" fill="#000">-1</text>
<text transform="translate(238.54,466) scale(1.160,1)" font-size="12" fill="#000">-0.5</text>
<text transform="translate(310.66,466) scale(1.160,1)" font-size="12" fill="#000">0</text>
<text transform="translate(368.86,466) scale(1.160,1)" font-size="12" fill="#000">0.5</text>
<text transform="translate(438.66,466) scale(1.160,1)" font-size="12" fill="#000">1</text>
<text transform="translate(496.86,466) scale(1.160,1)" font-size="12" fill="#000">1.5</text>
<text transform="translate(566.66,466) scale(1.160,1)" font-size="12" fill="#000">2</text>
<text transform="translate(256.50,118) scale(1.036,1.0)" font-size="18" font-weight="bold" fill="#000">TETRAz</text>
<text transform="translate(287.80,486) scale(1.175,1.0)" font-size="12" font-weight="bold" fill="#000">Inphase</text>
<text transform="translate(20,328.00) rotate(-90) scale(1.230,1)" font-size="12" font-weight="bold" fill="#000">Quadrature</text>
 <text transform="translate(324.10,16) scale(1.091,1.0)" font-size="9.4" font-weight="bold" fill="#e2e2e2">Top Block</text>
<text transform="translate(10.20,63) scale(0.976,1.0)" font-size="9.4" fill="#1c1c1c" stroke="#1c1c1c" stroke-width="0.2">BB</text>
<text transform="translate(36.30,63) scale(1.091,1.0)" font-size="9.4" fill="#1c1c1c" stroke="#1c1c1c" stroke-width="0.2">Demod</text>
<text transform="translate(83.80,62) scale(1.130,1.0)" font-size="9.4" fill="#1c1c1c" stroke="#1c1c1c" stroke-width="0.2">Xtra</text>
<text transform="translate(588.50,105) scale(1.121,1.0)" font-size="9.4" font-weight="bold" fill="#000">Options</text>
<text transform="translate(588.20,182) scale(1.108,1.0)" font-size="9.4" fill="#1c1c1c" stroke="#1c1c1c" stroke-width="0.2">Alpha:</text>
<text transform="translate(627.70,182) scale(1.107,1.0)" font-size="9.4" fill="#1c1c1c" stroke="#1c1c1c" stroke-width="0.2">10m</text>
<text transform="translate(588.10,283) scale(1.086,1.0)" font-size="9.4" fill="#1c1c1c" stroke="#1c1c1c" stroke-width="0.2">Gain Mu:</text>
<text transform="translate(639.70,283) scale(1.107,1.0)" font-size="9.4" fill="#1c1c1c" stroke="#1c1c1c" stroke-width="0.2">50m</text>
<text transform="translate(588.40,387) scale(1.104,1.0)" font-size="9.4" fill="#1c1c1c" stroke="#1c1c1c" stroke-width="0.2">Marker:</text>
<text transform="translate(637.50,387) scale(1.117,1.0)" font-size="9.4" fill="#1c1c1c" stroke="#1c1c1c" stroke-width="0.2">Dot Small</text>
<text transform="translate(643.10,476) scale(1.130,1.0)" font-size="9.4" fill="#1c1c1c" stroke="#1c1c1c" stroke-width="0.2">Stop</text>
</svg>
</body></html>
